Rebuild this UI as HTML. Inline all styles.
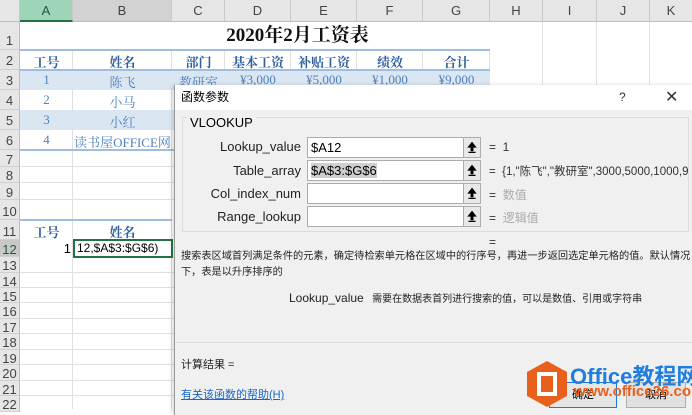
<!DOCTYPE html>
<html><head><meta charset="utf-8"><style>
*{margin:0;padding:0;box-sizing:border-box}
body{width:692px;height:409px;overflow:hidden;position:relative;background:#fff;font-family:"Liberation Sans","Noto Sans CJK SC",sans-serif}
.a{position:absolute}
.ch{position:absolute;top:0;height:22px;background:#e6e6e6;border-right:1px solid #c8c8c8;border-bottom:1px solid #bdbdbd;color:#444;font-size:13px;text-align:center;line-height:22px}
.rh{position:absolute;left:0;width:20px;background:#e6e6e6;border-bottom:1px solid #cfcfcf;border-right:1px solid #bdbdbd;color:#444;font-size:13px;text-align:center}
.hl{position:absolute;left:20px;right:0;height:1px;background:#e0e0e0}
.vl{position:absolute;top:22px;bottom:0;width:1px;background:#e0e0e0}
.s{font-family:"Liberation Serif","Noto Serif CJK SC",serif;color:#4f81bd;font-size:13px;position:absolute;text-align:center}
.b{font-weight:bold;color:#2f5f9e}
.lbl{position:absolute;font-size:13px;color:#222;width:130px;text-align:right}
.inp{position:absolute;left:132px;width:174px;height:21px;border:1px solid #acacac;background:#fff;font-size:13px;line-height:19px;padding-left:3px}
.btn{position:absolute;left:155px;top:-1px;width:18px;height:21px;border:1px solid #acacac;background:#e8e8e8}
.eq{position:absolute;left:314px;font-size:12px;color:#333}
.gv{color:#aaa}
</style></head><body>
<div class="ch" style="left:0;width:20px;background:#e6e6e6"></div>
<div class="ch" style="left:20px;width:53px;background:#9fd5b7;color:#1e5e3a;border-bottom:2px solid #217346">A</div>
<div class="ch" style="left:73px;width:99px;background:#d2d2d2">B</div>
<div class="ch" style="left:172px;width:53px">C</div>
<div class="ch" style="left:225px;width:66px">D</div>
<div class="ch" style="left:291px;width:66px">E</div>
<div class="ch" style="left:357px;width:66px">F</div>
<div class="ch" style="left:423px;width:67px">G</div>
<div class="ch" style="left:490px;width:53px">H</div>
<div class="ch" style="left:543px;width:54px">I</div>
<div class="ch" style="left:597px;width:53px">J</div>
<div class="ch" style="left:650px;width:42px;border-right:none">K</div>
<div class="vl" style="left:72px"></div><div class="vl" style="left:171px"></div><div class="vl" style="left:224px"></div><div class="vl" style="left:290px"></div><div class="vl" style="left:356px"></div><div class="vl" style="left:422px"></div><div class="vl" style="left:489px"></div><div class="vl" style="left:542px"></div><div class="vl" style="left:596px"></div><div class="vl" style="left:649px"></div>
<div class="a" style="left:20px;top:70px;width:470px;height:20px;background:#dbe6f3"></div>
<div class="a" style="left:20px;top:110px;width:470px;height:20px;background:#dbe6f3"></div>
<div class="a" style="left:20px;top:22px;width:470px;height:28px;background:#fff"></div>
<div class="a" style="left:20px;top:49px;width:470px;height:2px;background:#9fbde0"></div>
<div class="a" style="left:20px;top:69px;width:470px;height:2px;background:#9fbde0"></div>
<div class="a" style="left:20px;top:149px;width:470px;height:2px;background:#9fbde0"></div>
<div class="a" style="left:20px;top:219px;width:152px;height:2px;background:#9fbde0"></div>
<div class="rh" style="top:22px;height:28px;line-height:38px">1</div>
<div class="rh" style="top:50px;height:20px;line-height:22px">2</div>
<div class="rh" style="top:70px;height:20px;line-height:22px">3</div>
<div class="rh" style="top:90px;height:20px;line-height:22px">4</div>
<div class="rh" style="top:110px;height:20px;line-height:22px">5</div>
<div class="rh" style="top:130px;height:20px;line-height:22px">6</div>
<div class="rh" style="top:150px;height:17px;line-height:19px">7</div>
<div class="rh" style="top:167px;height:16px;line-height:18px">8</div>
<div class="rh" style="top:183px;height:17px;line-height:19px">9</div>
<div class="rh" style="top:200px;height:20px;line-height:24px">10</div>
<div class="rh" style="top:220px;height:20px;line-height:24px">11</div>
<div class="rh" style="top:240px;height:17px;line-height:19px;background:#c8c8c8;color:#1e5e3a">12</div>
<div class="rh" style="top:257px;height:16px;line-height:18px">13</div>
<div class="rh" style="top:273px;height:15px;line-height:17px">14</div>
<div class="rh" style="top:288px;height:15px;line-height:17px">15</div>
<div class="rh" style="top:303px;height:16px;line-height:18px">16</div>
<div class="rh" style="top:319px;height:15px;line-height:17px">17</div>
<div class="rh" style="top:334px;height:16px;line-height:18px">18</div>
<div class="rh" style="top:350px;height:15px;line-height:17px">19</div>
<div class="rh" style="top:365px;height:16px;line-height:18px">20</div>
<div class="rh" style="top:381px;height:15px;line-height:17px">21</div>
<div class="rh" style="top:396px;height:16px;line-height:18px">22</div>
<div class="hl" style="top:166px"></div><div class="hl" style="top:182px"></div><div class="hl" style="top:199px"></div>
<div class="hl" style="top:272px"></div><div class="hl" style="top:287px"></div><div class="hl" style="top:302px"></div><div class="hl" style="top:318px"></div><div class="hl" style="top:333px"></div><div class="hl" style="top:349px"></div><div class="hl" style="top:364px"></div><div class="hl" style="top:380px"></div><div class="hl" style="top:395px"></div>
<div class="a" style="left:172px;top:22px;width:251px;text-align:center;font-family:'Liberation Serif','Noto Serif CJK SC',serif;font-weight:bold;font-size:19px;line-height:28px;color:#111">2020年2月工资表</div>
<div class="s b" style="left:20px;width:53px;top:52px">工号</div>
<div class="s b" style="left:73px;width:99px;top:52px">姓名</div>
<div class="s b" style="left:172px;width:53px;top:52px">部门</div>
<div class="s b" style="left:225px;width:66px;top:52px">基本工资</div>
<div class="s b" style="left:291px;width:66px;top:52px">补贴工资</div>
<div class="s b" style="left:357px;width:66px;top:52px">绩效</div>
<div class="s b" style="left:423px;width:67px;top:52px">合计</div>
<div class="s" style="left:20px;width:53px;top:72px">1</div><div class="s" style="left:73px;width:99px;top:72px">陈飞</div>
<div class="s" style="left:172px;width:53px;top:72px">教研室</div><div class="s" style="left:225px;width:66px;top:72px">¥3,000</div><div class="s" style="left:291px;width:66px;top:72px">¥5,000</div><div class="s" style="left:357px;width:66px;top:72px">¥1,000</div><div class="s" style="left:423px;width:67px;top:72px">¥9,000</div>
<div class="s" style="left:20px;width:53px;top:92px">2</div><div class="s" style="left:73px;width:99px;top:92px">小马</div>
<div class="s" style="left:20px;width:53px;top:112px">3</div><div class="s" style="left:73px;width:99px;top:112px">小红</div>
<div class="s" style="left:20px;width:53px;top:132px">4</div><div class="s" style="left:73px;width:99px;top:132px">读书屋OFFICE网</div>
<div class="s b" style="left:20px;width:53px;top:222px">工号</div>
<div class="s b" style="left:73px;width:99px;top:222px">姓名</div>
<div class="a" style="left:20px;width:51px;top:241px;text-align:right;font-size:13px">1</div>
<div class="a" style="left:73px;top:239px;width:100px;height:19px;border:2px solid #217346;font-size:12px;line-height:15px;padding-left:2px;background:#fff">12,$A$3:$G$6)</div>
<div class="a" style="left:174px;top:85px;width:520px;height:330px;background:#f0f0f0;border-left:1px solid #9a9a9a;box-shadow:-2px 0 4px rgba(0,0,0,.15)">
 <div class="a" style="left:0;top:0;width:520px;height:25px;background:#fff;font-size:12px;line-height:25px;padding-left:6px">函数参数</div>
 <div class="a" style="left:444px;top:0;font-size:12px;line-height:25px;color:#333">?</div>
 <div class="a" style="left:490px;top:0;font-size:16px;line-height:25px;color:#333">✕</div>
 <div class="a" style="left:7px;top:32px;width:507px;height:115px;border:1px solid #dcdcdc"></div>
 <div class="a" style="left:12px;top:30px;font-size:13px;background:#f0f0f0;padding:0 3px">VLOOKUP</div>
 <div class="lbl" style="top:54px;left:-4px">Lookup_value</div>
 <div class="lbl" style="top:78px;left:-4px">Table_array</div>
 <div class="lbl" style="top:101px;left:-4px">Col_index_num</div>
 <div class="lbl" style="top:124px;left:-4px">Range_lookup</div>
 <div class="inp" style="top:52px">$A12<svg class="btn" viewBox="0 0 18 21"><path d="M9 5L5 10H8V14H10V10H13Z M5 16H13" stroke="#000" stroke-width="1.3" fill="#000"/></svg></div>
 <div class="inp" style="top:75px"><span style="background:#cfcfcf">$A$3:$G$6</span><svg class="btn" viewBox="0 0 18 21"><path d="M9 5L5 10H8V14H10V10H13Z M5 16H13" stroke="#000" stroke-width="1.3" fill="#000"/></svg></div>
 <div class="inp" style="top:98px"><svg class="btn" viewBox="0 0 18 21"><path d="M9 5L5 10H8V14H10V10H13Z M5 16H13" stroke="#000" stroke-width="1.3" fill="#000"/></svg></div>
 <div class="inp" style="top:121px"><svg class="btn" viewBox="0 0 18 21"><path d="M9 5L5 10H8V14H10V10H13Z M5 16H13" stroke="#000" stroke-width="1.3" fill="#000"/></svg></div>
 <div class="eq" style="top:55px">=&nbsp;&nbsp;1</div>
 <div class="eq" style="top:78px;white-space:nowrap;width:200px;overflow:hidden;font-size:11.5px">=&nbsp;&nbsp;{1,"陈飞","教研室",3000,5000,1000,90</div>
 <div class="eq" style="top:101px">=&nbsp;&nbsp;<span class="gv">数值</span></div>
 <div class="eq" style="top:124px">=&nbsp;&nbsp;<span class="gv">逻辑值</span></div>
 <div class="eq" style="top:150px">=</div>
 <div class="a" style="left:6px;top:164px;width:512px;font-size:10.2px;line-height:16px;color:#222">搜索表区域首列满足条件的元素，确定待检索单元格在区域中的行序号，再进一步返回选定单元格的值。默认情况下，表是以升序排序的</div>
 <div class="a" style="left:114px;top:205px;font-size:10px;color:#222;white-space:nowrap"><span style="font-size:12px">Lookup_value</span>&nbsp;&nbsp;&nbsp;需要在数据表首列进行搜索的值，可以是数值、引用或字符串</div>
 <div class="a" style="left:0;top:257px;width:520px;height:1px;background:#dcdcdc"></div>
 <div class="a" style="left:6px;top:271px;font-size:11px;color:#222">计算结果 =</div>
 <div class="a" style="left:6px;top:301px;font-size:11px;color:#1a66c7;text-decoration:underline">有关该函数的帮助(H)</div>
 <div class="a" style="left:374px;top:297px;width:68px;height:26px;border:1px solid #1a7ad6;background:#e5e5e5;font-size:11px;text-align:center;line-height:24px">确定</div>
 <div class="a" style="left:451px;top:297px;width:60px;height:26px;border:1px solid #adadad;background:#e1e1e1;font-size:11px;text-align:center;line-height:24px">取消</div>
</div>
<svg class="a" style="left:526px;top:360px" width="42" height="48" viewBox="0 0 42 48"><polygon points="21,1 41,12 41,36 21,47 1,36 1,12" fill="#e8601c"/><rect x="13" y="14" width="16" height="20" fill="none" stroke="#fff" stroke-width="4"/></svg>
<div class="a" style="left:570px;top:359px;font-size:22px;font-weight:bold;color:#1f7ee0;white-space:nowrap">Office教程网</div>
<div class="a" style="left:574px;top:383px;font-size:15px;font-weight:bold;color:#e8601c;white-space:nowrap">www.office26.com</div>
</body></html>
